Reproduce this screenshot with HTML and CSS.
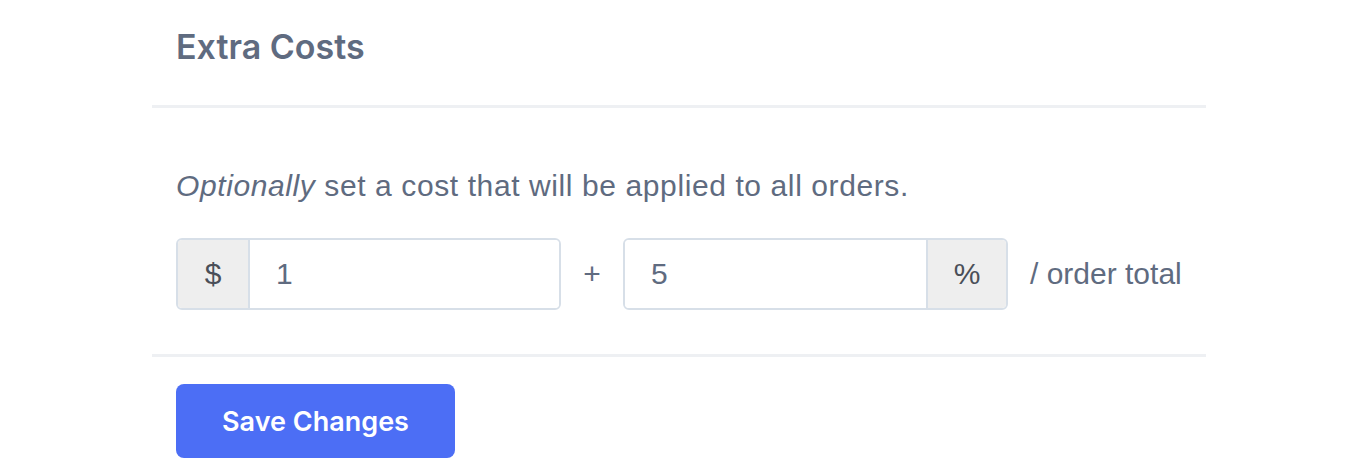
FILE: index.html
```html
<!DOCTYPE html>
<html lang="en">
<head>
<meta charset="utf-8">
<title>Extra Costs</title>
<link rel="stylesheet" href="styles.css">
</head>
<body>
<div class="card">
  <div class="card-header">
    <h2 class="title">Extra Costs</h2>
  </div>
  <div class="card-body">
    <p class="lead"><em>Optionally</em> set a cost that will be applied to all orders.</p>
    <div class="cost-row">
      <div class="input-group">
        <span class="addon addon-left">$</span>
        <input class="field" type="text" value="1">
      </div>
      <span class="plus">+</span>
      <div class="input-group">
        <input class="field" type="text" value="5">
        <span class="addon addon-right">%</span>
      </div>
      <span class="suffix">/ order total</span>
    </div>
  </div>
  <div class="card-footer">
    <button class="btn" type="button">Save Changes</button>
  </div>
</div>
</body>
</html>
```

FILE: styles.css
```css
* { box-sizing: border-box; }
html, body { margin: 0; padding: 0; background: #fff; }
body {
  font-family: "Liberation Sans", Arial, sans-serif;
  color: #5f6b80;
}
.card {
  margin-left: 152px;
  width: 1054px;
}
.card-header {
  padding: 22px 24px 33px;
  border-bottom: 3px solid #eef0f3;
}
.title {
  margin: 0;
  font-family: Inter, "Liberation Sans", sans-serif;
  font-weight: 600;
  font-size: 34px;
  line-height: 50px;
  color: #5f6b80;
}
.card-body {
  padding: 58px 24px 44px;
}
.lead {
  margin: 0 0 32px;
  font-size: 30px;
  line-height: 40px;
  letter-spacing: 0.6px;
}
.cost-row {
  display: flex;
  align-items: center;
}
.input-group {
  display: flex;
  flex-shrink: 0;
  width: 385px;
  height: 72px;
  border: 2px solid #d7dfe8;
  border-radius: 6px;
  overflow: hidden;
}
.addon {
  display: flex;
  align-items: center;
  justify-content: center;
  width: 72px;
  background: #eeeeee;
  font-size: 30px;
  color: #4a4f58;
}
.addon-left { border-right: 2px solid #d7dfe8; }
.addon-right { width: 80px; border-left: 2px solid #d7dfe8; }
.field {
  flex: 1;
  min-width: 0;
  border: 0;
  outline: 0;
  padding: 0 26px;
  font-family: "Liberation Sans", Arial, sans-serif;
  font-size: 30px;
  color: #5f6b80;
  background: #fff;
}
.plus {
  flex-shrink: 0;
  width: 62px;
  text-align: center;
  font-size: 30px;
}
.suffix {
  flex-shrink: 0;
  margin-left: 22px;
  font-size: 30px;
  white-space: nowrap;
}
.card-footer {
  border-top: 3px solid #eef0f3;
  padding: 27px 24px;
}
.btn {
  width: 279px;
  height: 74px;
  border: 0;
  border-radius: 8px;
  background: #4c6ef5;
  color: #fff;
  font-family: Inter, "Liberation Sans", sans-serif;
  font-weight: 600;
  font-size: 27px;
}
```
